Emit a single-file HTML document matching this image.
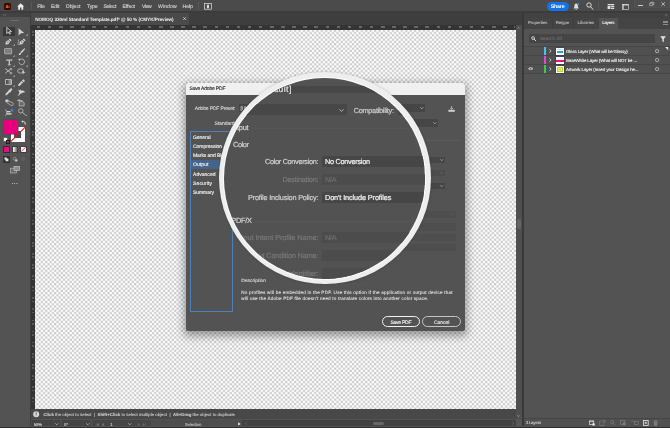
<!DOCTYPE html>
<html lang="en"><head><meta charset="utf-8"><title>Save Adobe PDF - Output</title>
<style>
html,body{margin:0;padding:0;}
body{width:670px;height:428px;overflow:hidden;background:#535353;font-family:"Liberation Sans",sans-serif;position:relative;}
.a{position:absolute;}
.t{position:absolute;white-space:nowrap;font-family:"Liberation Sans",sans-serif;}
svg{position:absolute;overflow:visible;}
svg.txt{filter:blur(.3px);}
svg.txt text{font-family:"Liberation Sans",sans-serif;text-rendering:geometricPrecision;white-space:pre;}
.fld{position:absolute;background:#464646;}
.row{position:absolute;left:523.6px;width:146.4px;height:8.9px;border-bottom:0.5px solid #484848;}
</style></head><body>

<!-- ===== canvas with checkerboard ===== -->
<svg class="a" style="left:35px;top:29.3px" width="481" height="380.2" viewBox="35 29.3 481 380.2">
<defs><pattern id="chk" x="36.3" y="30.1" width="4.444" height="4.444" patternUnits="userSpaceOnUse">
<rect width="4.444" height="4.444" fill="#ffffff"/><rect x="0.1" y="0.1" width="2.02" height="2.02" fill="#c2c2c2"/><rect x="2.322" y="2.322" width="2.02" height="2.02" fill="#c2c2c2"/></pattern></defs>
<rect x="35" y="29.3" width="481" height="380.2" fill="url(#chk)"/>
</svg>

<!-- ===== menu bar ===== -->
<div class="a" style="left:0;top:0;width:670px;height:12.4px;background:#4b4b4b"></div>
<div class="a" style="left:0;top:11.3px;width:670px;height:1.5px;background:#3c3c3c"></div>
<div class="a" style="left:4.1px;top:2.5px;width:7.3px;height:7.3px;background:#3a0703;border-radius:1.6px"></div>
<span class="t" style="left:5.5px;top:3.7px;font-size:4.1px;line-height:5px;color:#e8831a;font-weight:700">Ai</span>
<svg style="left:16.8px;top:2.6px" width="7.4" height="7" viewBox="0 0 74 70"><path d="M37 2 L2 34 L12 34 L12 68 L30 68 L30 46 L44 46 L44 68 L62 68 L62 34 L72 34 Z" fill="#ececec"/></svg>
<div class="a" style="left:30.9px;top:1.8px;width:0.6px;height:8.6px;background:#585858"></div>
<div class="a" style="left:197.6px;top:1.8px;width:0.6px;height:8.6px;background:#585858"></div>
<svg style="left:204px;top:2.6px" width="8" height="7" viewBox="0 0 80 70"><rect x="4" y="4" width="72" height="58" fill="none" stroke="#e0e0e0" stroke-width="7"/><path d="M30 18 h20 v26 l-10 14 l-12 -12 z" fill="#e0e0e0"/></svg>

<!-- share + right icons -->
<div class="a" style="left:546.7px;top:1.5px;width:22px;height:9.6px;border-radius:4.8px;background:#1473e6"></div>
<svg style="left:573.3px;top:2.6px" width="6.4" height="7.4" viewBox="0 0 64 74"><path d="M32 6 C18 6 14 20 14 32 C14 44 6 50 4 56 L60 56 C58 50 50 44 50 32 C50 20 46 6 32 6 Z M24 62 h16 c0 12 -16 12 -16 0z" fill="#dcdcdc"/><circle cx="52" cy="10" r="11" fill="#2c8cf4"/></svg>
<svg style="left:585.8px;top:2.4px" width="7.6" height="7.8" viewBox="0 0 76 78"><circle cx="30" cy="30" r="22" fill="none" stroke="#e4e4e4" stroke-width="9"/><path d="M46 48 L70 74" stroke="#e4e4e4" stroke-width="10" stroke-linecap="round"/></svg>
<div class="a" style="left:598.2px;top:1.8px;width:0.6px;height:8.6px;background:#575757"></div>
<svg style="left:606.9px;top:4.1px" width="7.8" height="5" viewBox="0 0 80 60"><rect x="0" y="0" width="80" height="14" fill="#e0e0e0"/><rect x="0" y="22" width="34" height="38" fill="#e0e0e0"/><rect x="42" y="22" width="38" height="14" fill="#e0e0e0"/><rect x="42" y="44" width="38" height="16" fill="#e0e0e0"/></svg>
<svg style="left:622px;top:3.8px" width="7.2" height="5.7" viewBox="0 0 74 64"><rect x="4" y="4" width="66" height="56" fill="none" stroke="#dcdcdc" stroke-width="7"/><rect x="4" y="4" width="66" height="12" fill="#dcdcdc"/><rect x="4" y="4" width="14" height="56" fill="#dcdcdc" opacity=".7"/></svg>
<div class="a" style="left:634px;top:0;width:36px;height:8px;background:#4e4e4e;box-shadow:inset .5px -.5px 0 #575757"></div>
<div class="a" style="left:638.2px;top:4.6px;width:4.8px;height:0.9px;background:#cfcfcf"></div>
<svg style="left:649.2px;top:2.3px" width="5.4" height="3.9" viewBox="0 0 68 54"><rect x="4" y="18" width="44" height="32" rx="4" fill="none" stroke="#d8d8d8" stroke-width="8"/><path d="M20 14 V4 H64 V36 H52" fill="none" stroke="#d8d8d8" stroke-width="8"/></svg>
<svg style="left:661.2px;top:2.1px" width="4.4" height="4.2" viewBox="0 0 64 64"><path d="M6 6 L58 58 M58 6 L6 58" stroke="#e0e0e0" stroke-width="11"/></svg>

<!-- ===== document tab bar ===== -->
<div class="a" style="left:31.3px;top:12.7px;width:491px;height:12.1px;background:#3e3e3e"></div>
<div class="a" style="left:31.3px;top:12.7px;width:157.3px;height:12.1px;background:#4a4a4a"></div>
<svg style="left:182.8px;top:17px" width="3.2" height="3.2" viewBox="0 0 32 32"><path d="M3 3 L29 29 M29 3 L3 29" stroke="#f0f0f0" stroke-width="7"/></svg>

<!-- ===== rulers ===== -->
<div class="a" style="left:31.3px;top:24.7px;width:484.6px;height:5px;background:#343434"></div>
<div class="a" style="left:31.3px;top:24.7px;width:3.8px;height:384.8px;background:#343434"></div>
<div class="a" id="rt" style="left:37.2px;top:25.9px;width:478px;height:2.2px;background:repeating-linear-gradient(90deg,#9a9a9a 0,#9a9a9a 3.4px,transparent 3.4px,transparent 11.1px);opacity:.5"></div>
<div class="a" id="rl" style="left:32.2px;top:31px;width:1.9px;height:377px;background:repeating-linear-gradient(180deg,#8c8c8c 0,#8c8c8c 1.6px,transparent 1.6px,transparent 3.4px,#8c8c8c 3.4px,#8c8c8c 5px,transparent 5px,transparent 11.1px);opacity:.42"></div>

<!-- ===== left toolbar ===== -->
<div class="a" style="left:0;top:12.7px;width:30.2px;height:413.5px;background:#535353"></div>
<div class="a" style="left:0;top:12.7px;width:30.2px;height:4.4px;background:#424242"></div>
<div class="a" style="left:30.2px;top:12.7px;width:1.1px;height:413.5px;background:#3c3c3c"></div>
<svg style="left:3px;top:14px" width="3" height="2.2" viewBox="0 0 30 22"><path d="M13 3 L5 11 L13 19 M27 3 L19 11 L27 19" fill="none" stroke="#a8a8a8" stroke-width="4.5"/></svg>
<div class="a" style="left:10.8px;top:19.9px;width:8.4px;height:0.9px;background:repeating-linear-gradient(90deg,#6e6e6e 0,#6e6e6e .6px,transparent .6px,transparent 1.05px)"></div>
<div class="a" style="left:3px;top:26.7px;width:11.6px;height:9px;background:#383838;border-radius:.6px"></div>
<svg style="left:5.60px;top:27.40px" width="6.4" height="7.6" viewBox="0 0 64 76"><path d="M8 4 L8 66 L24 50 L36 72 L44 68 L33 46 L56 46 Z" fill="none" stroke="#d2d2d2" stroke-width="9" stroke-linejoin="round"/></svg>
<svg style="left:18.30px;top:27.50px" width="6.6" height="7.8" viewBox="0 0 64 76"><path d="M6 2 L6 72 L28 50 L60 48 Z" fill="#d2d2d2"/></svg>
<svg style="left:25.60px;top:34.20px" width="1.7" height="1.7" viewBox="0 0 14 14"><path d="M14 0 V14 H0 Z" fill="#c4c4c4"/></svg>
<svg style="left:5.30px;top:37.90px" width="7" height="7" viewBox="0 0 64 64"><path d="M44 4 L60 20 L50 30 L34 14 Z M30 18 L46 34 L30 56 L8 60 L4 56 L8 34 Z" fill="#d2d2d2"/><circle cx="26" cy="38" r="5" fill="#535353"/></svg>
<svg style="left:19.10px;top:37.90px" width="7" height="7" viewBox="0 0 64 64"><path d="M44 4 L60 20 L50 30 L34 14 Z M30 18 L46 34 L30 56 L8 60 L4 56 L8 34 Z" fill="#d2d2d2"/><circle cx="26" cy="38" r="5" fill="#535353"/></svg>
<svg style="left:16.50px;top:38.80px" width="3.4" height="6.4" viewBox="0 0 34 64"><path d="M20 4 C2 16 30 28 12 40 C2 50 14 62 28 54" fill="none" stroke="#d2d2d2" stroke-width="6"/></svg>
<svg style="left:12.80px;top:44.40px" width="1.7" height="1.7" viewBox="0 0 14 14"><path d="M14 0 V14 H0 Z" fill="#c4c4c4"/></svg>
<svg style="left:4.30px;top:48.40px" width="8.2" height="6.4" viewBox="0 0 82 64"><rect x="5" y="5" width="72" height="54" rx="6" fill="#7e7e7e" stroke="#b8b8b8" stroke-width="7"/></svg>
<svg style="left:17.70px;top:47.90px" width="7.4" height="7.4" viewBox="0 0 74 74"><path d="M64 2 L72 10 L36 52 L24 40 Z M22 44 L32 54 C30 68 16 72 2 70 C14 62 10 50 22 44 Z" fill="#d2d2d2"/></svg>
<svg style="left:12.80px;top:54.60px" width="1.7" height="1.7" viewBox="0 0 14 14"><path d="M14 0 V14 H0 Z" fill="#c4c4c4"/></svg>
<svg style="left:25.60px;top:54.60px" width="1.7" height="1.7" viewBox="0 0 14 14"><path d="M14 0 V14 H0 Z" fill="#c4c4c4"/></svg>
<svg style="left:5.50px;top:58.50px" width="6.6" height="6.6" viewBox="0 0 66 66"><path d="M4 4 H62 V20 H54 V14 H39 V54 H48 V62 H18 V54 H27 V14 H12 V20 H4 Z" fill="#d2d2d2"/></svg>
<svg style="left:17.80px;top:58.20px" width="7.2" height="7.2" viewBox="0 0 72 72"><path d="M16 20 A28 28 0 1 1 10 44" fill="none" stroke="#d2d2d2" stroke-width="7"/><path d="M4 6 L26 12 L10 30 Z" fill="#d2d2d2"/></svg>
<svg style="left:12.80px;top:64.80px" width="1.7" height="1.7" viewBox="0 0 14 14"><path d="M14 0 V14 H0 Z" fill="#c4c4c4"/></svg>
<svg style="left:25.60px;top:64.80px" width="1.7" height="1.7" viewBox="0 0 14 14"><path d="M14 0 V14 H0 Z" fill="#c4c4c4"/></svg>
<svg style="left:4.80px;top:68.30px" width="8" height="7.4" viewBox="0 0 80 74"><path d="M6 8 L52 44 M6 50 L50 16" stroke="#d2d2d2" stroke-width="8" stroke-linecap="round"/><circle cx="60" cy="12" r="9" fill="none" stroke="#d2d2d2" stroke-width="6"/><circle cx="60" cy="52" r="9" fill="none" stroke="#d2d2d2" stroke-width="6"/></svg>
<svg style="left:17.10px;top:68.00px" width="8.6" height="7.2" viewBox="0 0 86 72"><ellipse cx="36" cy="30" rx="30" ry="22" fill="none" stroke="#d2d2d2" stroke-width="7"/><path d="M52 26 L84 46 L66 50 L60 68 Z" fill="#d2d2d2"/></svg>
<svg style="left:12.80px;top:75.00px" width="1.7" height="1.7" viewBox="0 0 14 14"><path d="M14 0 V14 H0 Z" fill="#c4c4c4"/></svg>
<div class="a" style="left:4.60px;top:78.80px;width:7.6px;height:6.6px;border:.5px solid #b4b4b4;border-radius:.8px;box-sizing:border-box;background:linear-gradient(90deg,#3e3e3e,#a4a4a4)"></div>
<svg style="left:17.80px;top:78.60px" width="7.2" height="7.2" viewBox="0 0 76 76"><path d="M56 2 L74 20 L60 34 L42 16 Z M38 22 L54 38 L20 72 L2 74 L4 56 Z" fill="#d2d2d2"/><path d="M26 40 L36 50" stroke="#535353" stroke-width="6"/></svg>
<svg style="left:12.80px;top:85.20px" width="1.7" height="1.7" viewBox="0 0 14 14"><path d="M14 0 V14 H0 Z" fill="#c4c4c4"/></svg>
<svg style="left:4.80px;top:88.40px" width="7.6" height="7.6" viewBox="0 0 76 76"><path d="M56 4 C66 -2 78 10 70 20 L58 32 L62 36 L54 44 L50 40 L20 70 L6 74 L4 70 L8 56 L38 26 L34 22 L42 14 L46 18 Z" fill="#d2d2d2"/></svg>
<svg style="left:17.40px;top:88.80px" width="8.4" height="6.8" viewBox="0 0 84 68"><path d="M10 6 L26 14 L36 4 L44 18 C60 8 80 20 82 36 C72 30 62 32 56 40 L38 44 L18 64 L6 66 L14 54 L24 40 L20 24 Z" fill="#d2d2d2"/></svg>
<svg style="left:4.70px;top:99.00px" width="8.2" height="6.8" viewBox="0 0 82 68"><rect x="4" y="6" width="30" height="22" fill="#d2d2d2"/><path d="M22 14 L66 34 A16 16 0 1 1 54 60 L10 30 Z" fill="none" stroke="#d2d2d2" stroke-width="7"/></svg>
<svg style="left:17.30px;top:98.90px" width="7.8" height="7.4" viewBox="0 0 78 74"><path d="M22 0 V20 M0 16 H56" stroke="#d2d2d2" stroke-width="7"/><path d="M22 26 H60 L72 38 V70 H22 Z" fill="#6a6a6a" stroke="#d2d2d2" stroke-width="6"/></svg>
<svg style="left:4.60px;top:108.80px" width="8.4" height="7.2" viewBox="0 0 84 72"><path d="M4 4 L16 22 V50 L4 68" fill="none" stroke="#d2d2d2" stroke-width="7"/><rect x="20" y="20" width="34" height="14" fill="#d2d2d2"/><rect x="20" y="42" width="46" height="14" fill="#d2d2d2"/><rect x="58" y="2" width="24" height="24" rx="4" fill="#2a8cf0"/></svg>
<svg style="left:17.60px;top:108.00px" width="8.8" height="8" viewBox="0 0 88 80"><circle cx="28" cy="28" r="22" fill="none" stroke="#d2d2d2" stroke-width="7"/><path d="M44 44 L74 70" stroke="#d2d2d2" stroke-width="8"/><path d="M88 66 V80 H74 Z" fill="#c4c4c4"/></svg>
<div class="a" style="left:10.5px;top:127.2px;width:14.6px;height:14.6px;background:#ffffff"></div>
<div class="a" style="left:14.2px;top:131px;width:6.8px;height:6.8px;background:#4a4a4a"></div>
<svg style="left:10px;top:126.8px" width="15.4" height="15.4" viewBox="0 0 154 154"><path d="M2 152 L152 2" stroke="#f01414" stroke-width="11"/></svg>
<div class="a" style="left:3px;top:119.8px;width:14.5px;height:14.4px;background:#e6007e;box-shadow:0 0 0 .5px #4a4a4a"></div>
<svg style="left:20.70px;top:119.90px" width="5.4" height="5.4" viewBox="0 0 54 54"><path d="M4 16 L18 2 V10 C40 10 46 20 46 34 H52 L42 50 L32 34 H38 C38 24 34 20 18 20 V30 Z" fill="#d8d8d8"/></svg>
<div class="a" style="left:3.8px;top:137.6px;width:3.4px;height:3.4px;background:#fafafa;box-shadow:0 0 0 .6px #7a7a7a"></div>
<div class="a" style="left:5.6px;top:139.6px;width:2.4px;height:2.4px;border:.8px solid #1c1c1c"></div>
<div class="a" style="left:3.2px;top:146.2px;width:6.6px;height:6.8px;background:#2e2e2e;border-radius:.6px"></div>
<div class="a" style="left:4.2px;top:147.4px;width:4.6px;height:4.4px;background:#ea0a86"></div>
<div class="a" style="left:12.2px;top:146.2px;width:6px;height:6.8px;background:#404040;border-radius:.6px"></div>
<div class="a" style="left:13.2px;top:147.4px;width:4px;height:4.4px;background:linear-gradient(90deg,#ffffff,#6a6a6a)"></div>
<div class="a" style="left:20.4px;top:146.2px;width:6.2px;height:6.8px;background:#404040;border-radius:.6px"></div>
<div class="a" style="left:21.3px;top:147.4px;width:4.4px;height:4.4px;background:#f4f4f4"></div>
<svg style="left:21.2px;top:147.2px" width="4.8" height="4.8" viewBox="0 0 48 48"><path d="M2 46 L46 2" stroke="#f01414" stroke-width="8"/></svg>
<div class="a" style="left:3.2px;top:156.4px;width:6.6px;height:6.4px;background:#333333;border-radius:.6px"></div>
<svg style="left:4.20px;top:157.40px" width="4.6" height="4.4" viewBox="0 0 46 44"><circle cx="16" cy="16" r="13" fill="#d0d0d0"/><rect x="16" y="16" width="28" height="26" rx="3" fill="#e6e6e6"/></svg>
<svg style="left:12.80px;top:157.30px" width="4.8" height="4.6" viewBox="0 0 48 46"><circle cx="18" cy="18" r="14" fill="none" stroke="#bdbdbd" stroke-width="5"/><rect x="22" y="24" width="22" height="20" rx="3" fill="#cfcfcf"/></svg>
<svg style="left:21.00px;top:157.20px" width="4" height="4" viewBox="0 0 40 40"><circle cx="20" cy="20" r="15" fill="none" stroke="#6e6e6e" stroke-width="5"/><path d="M12 24 L26 14" stroke="#6e6e6e" stroke-width="5"/></svg>
<svg style="left:10.00px;top:166.10px" width="10" height="7.4" viewBox="0 0 100 74"><rect x="4" y="22" width="62" height="48" fill="#6a6a6a" stroke="#c0c0c0" stroke-width="6"/><rect x="40" y="4" width="56" height="42" fill="#8c8c8c" stroke="#cfcfcf" stroke-width="6"/></svg>
<div class="a" style="left:12px;top:182.8px;width:1.3px;height:1.3px;border-radius:50%;background:#dedede;box-shadow:2.2px 0 0 #dedede,4.4px 0 0 #dedede"></div>

<!-- ===== bottom bars ===== -->
<div class="a" style="left:31.3px;top:409.3px;width:491px;height:10.2px;background:#484848"></div>
<div class="a" style="left:31.3px;top:419.5px;width:491px;height:6.7px;background:#4e4e4e"></div>
<div class="a" style="left:31.6px;top:420px;width:21.8px;height:6px;background:#444444"></div>
<div class="a" style="left:54px;top:420px;width:5.8px;height:6px;background:#444444"></div>
<div class="a" style="left:62.4px;top:420px;width:21.4px;height:6px;background:#444444"></div>
<div class="a" style="left:84.4px;top:420px;width:5.8px;height:6px;background:#444444"></div>
<div class="a" style="left:92.6px;top:420px;width:58.4px;height:6px;background:#464646"></div>
<div class="a" style="left:242px;top:419.6px;width:274.4px;height:6.9px;background:#424242"></div>
<div class="a" style="left:373px;top:421.6px;width:10.7px;height:3.4px;border-radius:1.8px;background:#686868"></div>
<svg style="left:33px;top:411.4px" width="6.4" height="6.4" viewBox="0 0 64 64"><circle cx="32" cy="32" r="30" fill="#dadada"/><path d="M32 14 v24" stroke="#555" stroke-width="8" stroke-linecap="round"/><circle cx="32" cy="49" r="4.5" fill="#555"/></svg>
<!-- chevrons in status bar -->
<svg style="left:55.2px;top:423.2px" width="3.6" height="2.2" viewBox="0 0 36 22"><path d="M3 3 L18 18 L33 3" fill="none" stroke="#e0e0e0" stroke-width="6"/></svg>
<svg style="left:85.8px;top:423.2px" width="3.6" height="2.2" viewBox="0 0 36 22"><path d="M3 3 L18 18 L33 3" fill="none" stroke="#e0e0e0" stroke-width="6"/></svg>
<svg style="left:128.4px;top:423.2px" width="3.6" height="2.2" viewBox="0 0 36 22"><path d="M3 3 L18 18 L33 3" fill="none" stroke="#e0e0e0" stroke-width="6"/></svg>
<svg style="left:96.4px;top:422.6px" width="10.6" height="3.2" viewBox="0 0 106 32"><path d="M4 2 V30 M28 2 L10 16 L28 30 Z M78 2 L60 16 L78 30 Z" fill="#777" stroke="#777" stroke-width="4"/></svg>
<svg style="left:137.4px;top:422.6px" width="10.6" height="3.2" viewBox="0 0 106 32"><path d="M10 2 L28 16 L10 30 Z M60 2 L78 16 L60 30 Z M86 2 V30" fill="#686868" stroke="#686868" stroke-width="4"/></svg>
<svg style="left:238px;top:421.9px" width="2.8" height="3.8" viewBox="0 0 28 38"><path d="M2 2 L26 19 L2 36 Z" fill="#f0f0f0"/></svg>
<svg style="left:245.4px;top:422.1px" width="2" height="3.2" viewBox="0 0 20 32"><path d="M17 3 L4 16 L17 29" fill="none" stroke="#8a8a8a" stroke-width="5"/></svg>
<svg style="left:511.8px;top:422px" width="2" height="3.2" viewBox="0 0 20 32"><path d="M3 3 L16 16 L3 29" fill="none" stroke="#8a8a8a" stroke-width="5"/></svg>

<!-- ===== vertical scrollbar ===== -->
<div class="a" style="left:515.9px;top:24.7px;width:6.2px;height:394.5px;background:#4f4f4f"></div>
<div class="a" style="left:517.1px;top:219.4px;width:4.4px;height:10px;border-radius:2px;background:#656565"></div>
<svg style="left:517.4px;top:26.8px" width="3.2" height="2" viewBox="0 0 32 20"><path d="M3 17 L16 4 L29 17" fill="none" stroke="#b4b4b4" stroke-width="5"/></svg>
<svg style="left:517.4px;top:415.2px" width="3.2" height="2" viewBox="0 0 32 20"><path d="M3 3 L16 16 L29 3" fill="none" stroke="#c4c4c4" stroke-width="5"/></svg>
<div class="a" style="left:516.4px;top:419.6px;width:5.7px;height:6.8px;background:#575757"></div>
<div class="a" style="left:522.1px;top:12.7px;width:1.8px;height:413.8px;background:#393939"></div>

<!-- ===== right panel ===== -->
<div class="a" style="left:523.6px;top:12.7px;width:146.4px;height:413.5px;background:#535353"></div>
<div class="a" style="left:523.6px;top:12.7px;width:146.4px;height:5px;background:#424242"></div>
<div class="a" style="left:523.6px;top:17.6px;width:146.4px;height:11px;background:#444444"></div>
<div class="a" style="left:598.8px;top:17.6px;width:19.1px;height:11px;background:#535353"></div>
<div class="a" style="left:551.6px;top:18px;width:0.5px;height:10.2px;background:#3e3e3e"></div>
<div class="a" style="left:573px;top:18px;width:0.5px;height:10.2px;background:#3e3e3e"></div>
<svg style="left:664.8px;top:14.1px" width="3" height="2.2" viewBox="0 0 30 22"><path d="M3 3 L11 11 L3 19 M17 3 L25 11 L17 19" fill="none" stroke="#a8a8a8" stroke-width="4.5"/></svg>
<div class="a" style="left:663px;top:21.3px;width:4.6px;height:3.4px;background:linear-gradient(#8a8a8a 0 .6px,transparent .6px 1.4px,#8a8a8a 1.4px 2px,transparent 2px 2.8px,#8a8a8a 2.8px 3.4px)"></div>
<!-- search -->
<div class="a" style="left:529px;top:33.9px;width:126px;height:9.2px;background:#454545;border-radius:.8px"></div>
<svg style="left:531px;top:36px" width="5.2" height="5.2" viewBox="0 0 48 48"><circle cx="19" cy="19" r="13" fill="none" stroke="#dcdcdc" stroke-width="8"/><path d="M29 29 L44 44" stroke="#dcdcdc" stroke-width="9" stroke-linecap="round"/></svg>
<svg style="left:659.8px;top:35.6px" width="6.2" height="6.4" viewBox="0 0 62 64"><path d="M2 2 H60 L38 30 V62 L24 52 V30 Z" fill="#e4e4e4"/></svg>
<!-- layer rows -->
<div class="a" style="left:523.6px;top:46.4px;width:146.4px;height:27.2px;background:#505050"></div>
<div class="a" style="left:523.6px;top:46.4px;width:146.4px;height:0.5px;background:#464646"></div>
<div class="a" style="left:523.6px;top:55.3px;width:146.4px;height:0.5px;background:#464646"></div>
<div class="a" style="left:523.6px;top:64.3px;width:146.4px;height:0.5px;background:#464646"></div>
<div class="a" style="left:523.6px;top:73.3px;width:146.4px;height:0.5px;background:#464646"></div>
<div class="a" style="left:652.4px;top:46.4px;width:0.5px;height:27px;background:#4a4a4a"></div>
<div class="a" style="left:543.5px;top:47.2px;width:2.3px;height:7.7px;background:#48c4ea"></div>
<div class="a" style="left:543.5px;top:56.2px;width:2.3px;height:7.7px;background:#e04ccc"></div>
<div class="a" style="left:543.5px;top:65.2px;width:2.3px;height:7.7px;background:#3ccc4c"></div>
<svg style="left:548.6px;top:49.2px" width="2.6" height="4" viewBox="0 0 22 36"><path d="M4 3 L18 18 L4 33" fill="none" stroke="#eaeaea" stroke-width="6.5"/></svg>
<svg style="left:548.6px;top:58.2px" width="2.6" height="4" viewBox="0 0 22 36"><path d="M4 3 L18 18 L4 33" fill="none" stroke="#eaeaea" stroke-width="6.5"/></svg>
<svg style="left:548.6px;top:67.2px" width="2.6" height="4" viewBox="0 0 22 36"><path d="M4 3 L18 18 L4 33" fill="none" stroke="#eaeaea" stroke-width="6.5"/></svg>
<div class="a" style="left:556.4px;top:47.7px;width:7.4px;height:7px;background:#ffffff;box-shadow:0 0 0 .5px #3a3a3a"></div>
<div class="a" style="left:557px;top:49.2px;width:6.2px;height:1px;background:#bfe4f8"></div>
<div class="a" style="left:557px;top:50.6px;width:6.2px;height:2px;background:#2aa0e8"></div>
<div class="a" style="left:556.4px;top:56.7px;width:7.4px;height:7px;background:#ffffff;box-shadow:0 0 0 .5px #3a3a3a"></div>
<div class="a" style="left:556.4px;top:60px;width:7.4px;height:2px;background:#e4108c"></div>
<div class="a" style="left:556.4px;top:65.7px;width:7.4px;height:7px;background:#ffffff;box-shadow:0 0 0 .5px #3a3a3a"></div>
<div class="a" style="left:557px;top:66.5px;width:6.2px;height:5.4px;background:#bcd62a"></div>
<div class="a" style="left:558.4px;top:67.8px;width:3.4px;height:2.8px;border:.4px solid #e4f08a;box-sizing:border-box"></div>
<svg style="left:654.8px;top:49.3px" width="4.2" height="4.2" viewBox="0 0 42 42"><circle cx="21" cy="21" r="16.5" fill="none" stroke="#cfcfcf" stroke-width="7"/></svg>
<svg style="left:654.8px;top:58.1px" width="4.2" height="4.2" viewBox="0 0 42 42"><circle cx="21" cy="21" r="16.5" fill="none" stroke="#cfcfcf" stroke-width="7"/></svg>
<svg style="left:654.8px;top:66.9px" width="4.2" height="4.2" viewBox="0 0 42 42"><circle cx="21" cy="21" r="16.5" fill="none" stroke="#cfcfcf" stroke-width="7"/></svg>
<svg style="left:664.8px;top:46.9px" width="3.2" height="3.2" viewBox="0 0 26 26"><path d="M0 0 H26 V26 Z" fill="#e4e4e4"/></svg>
<svg style="left:527.6px;top:67.3px" width="5.4" height="3.4" viewBox="0 0 54 34"><path d="M2 17 C14 -2 40 -2 52 17 C40 36 14 36 2 17 Z" fill="#c4c4c4"/><circle cx="27" cy="17" r="8" fill="#555"/></svg>
<!-- panel bottom bar -->
<div class="a" style="left:523.6px;top:418.3px;width:146.4px;height:8.3px;background:#515151;border-top:.6px solid #454545"></div>
<svg style="left:588.7px;top:419.8px" width="6.2" height="6" viewBox="0 0 62 60"><rect x="6" y="10" width="40" height="34" fill="none" stroke="#e6e6e6" stroke-width="7"/><path d="M12 0 V16 M40 0 V16 M0 16 H52" stroke="#e6e6e6" stroke-width="5"/><rect x="34" y="34" width="24" height="22" fill="#e6e6e6"/></svg>
<svg style="left:598.8px;top:419.8px" width="6.6" height="6" viewBox="0 0 66 60"><path d="M30 12 H6 V56 H50 V32" fill="none" stroke="#7c7c7c" stroke-width="7"/><path d="M34 4 H60 V30 M60 4 L32 32" fill="none" stroke="#7c7c7c" stroke-width="7"/></svg>
<svg style="left:609.8px;top:420px" width="5.6" height="5.6" viewBox="0 0 56 56"><circle cx="22" cy="22" r="16" fill="none" stroke="#7c7c7c" stroke-width="7"/><path d="M34 34 L52 52" stroke="#7c7c7c" stroke-width="8"/></svg>
<svg style="left:620px;top:420px" width="6" height="5.6" viewBox="0 0 60 56"><rect x="4" y="4" width="44" height="40" fill="none" stroke="#7c7c7c" stroke-width="7"/><rect x="26" y="24" width="30" height="28" fill="#7c7c7c"/></svg>
<svg style="left:630.6px;top:420.4px" width="7.6" height="5" viewBox="0 0 76 50"><path d="M2 10 H30 L40 24" fill="none" stroke="#7c7c7c" stroke-width="7"/><rect x="34" y="14" width="38" height="32" fill="none" stroke="#7c7c7c" stroke-width="7"/></svg>
<svg style="left:642.7px;top:419.9px" width="5.6" height="5.8" viewBox="0 0 56 58"><rect x="4" y="4" width="48" height="50" fill="none" stroke="#e6e6e6" stroke-width="8"/><path d="M28 16 V42 M15 29 H41" stroke="#e6e6e6" stroke-width="8"/></svg>
<svg style="left:653.4px;top:419.8px" width="5.2" height="6" viewBox="0 0 52 60"><path d="M2 12 H50 M18 12 V4 H34 V12" fill="none" stroke="#7c7c7c" stroke-width="7"/><path d="M8 18 H44 L40 58 H12 Z" fill="#7c7c7c"/></svg>

<!-- bottom strip -->
<div class="a" style="left:0;top:426.5px;width:670px;height:1.6px;background:#2e2e2e"></div>

<!-- ===== dialog ===== -->
<div class="a" style="left:186.4px;top:83.4px;width:278.4px;height:247.3px;background:#535353;border-radius:2px;box-shadow:0 3px 9px 1.5px rgba(0,0,0,.36)"></div>
<div class="a" style="left:186.4px;top:83.4px;width:278.4px;height:11.3px;background:#f0f0f0;border-radius:2px 2px 0 0"></div>
<!-- preset dropdown -->
<div class="fld" style="left:238.6px;top:103.9px;width:186.8px;height:8px"></div>
<svg style="left:420.2px;top:106.8px" width="3.6" height="2.2" viewBox="0 0 36 22"><path d="M3 3 L18 18 L33 3" fill="none" stroke="#d8d8d8" stroke-width="6"/></svg>
<svg style="left:448px;top:105.8px" width="7.2" height="6" viewBox="0 0 72 60"><path d="M36 0 V30 M22 20 L36 34 L50 20" fill="none" stroke="#d0d0d0" stroke-width="7"/><rect x="4" y="38" width="64" height="20" fill="#d0d0d0"/></svg>
<div class="fld" style="left:238.6px;top:119px;width:199.2px;height:7.8px"></div>
<svg style="left:432.6px;top:121.9px" width="3.6" height="2.2" viewBox="0 0 36 22"><path d="M3 3 L18 18 L33 3" fill="none" stroke="#d8d8d8" stroke-width="6"/></svg>
<!-- list box -->
<div class="a" style="left:190.1px;top:131.4px;width:42.7px;height:180.4px;border:.7px solid #4f7fb6;box-sizing:border-box"></div>
<div class="a" style="left:190.8px;top:160.3px;width:41.3px;height:8.4px;background:#46638a"></div>
<!-- right-side fields of the dialog -->
<div class="a" style="left:236px;top:140px;width:224px;height:.5px;background:#5b5b5b"></div>
<div class="fld" style="left:322px;top:156.7px;width:123.4px;height:6.8px"></div>
<div class="fld" style="left:322px;top:169.6px;width:123.4px;height:6.8px;background:#4d4d4d"></div>
<div class="fld" style="left:322px;top:182.6px;width:123.4px;height:6.8px"></div>
<svg style="left:440.2px;top:159.1px" width="3.4" height="2" viewBox="0 0 36 22"><path d="M3 3 L18 18 L33 3" fill="none" stroke="#d8d8d8" stroke-width="6"/></svg>
<svg style="left:440.2px;top:172px" width="3.4" height="2" viewBox="0 0 36 22"><path d="M3 3 L18 18 L33 3" fill="none" stroke="#707070" stroke-width="6"/></svg>
<svg style="left:440.2px;top:185px" width="3.4" height="2" viewBox="0 0 36 22"><path d="M3 3 L18 18 L33 3" fill="none" stroke="#d8d8d8" stroke-width="6"/></svg>
<div class="fld" style="left:322px;top:210.5px;width:134.4px;height:7.4px;background:#4e4e4e"></div>
<svg style="left:451px;top:213.2px" width="3.4" height="2" viewBox="0 0 36 22"><path d="M3 3 L18 18 L33 3" fill="none" stroke="#707070" stroke-width="6"/></svg>
<div class="fld" style="left:322px;top:223.4px;width:134.4px;height:7.2px;background:#4e4e4e"></div>
<div class="fld" style="left:322px;top:233.6px;width:134.4px;height:7.2px;background:#4e4e4e"></div>
<div class="fld" style="left:322px;top:243.8px;width:134.4px;height:7.2px;background:#4e4e4e"></div>
<div class="a" style="left:237.7px;top:284px;width:221.8px;height:27.6px;border:.5px solid #5a5a5a;box-sizing:border-box;opacity:.35"></div>
<!-- buttons -->
<div class="a" style="left:381.6px;top:316px;width:38.9px;height:11px;border:.95px solid #f2f2f2;border-radius:5.5px;box-sizing:border-box"></div>
<div class="a" style="left:422.4px;top:316px;width:38.5px;height:11px;border:.7px solid #c4c4c4;border-radius:5.5px;box-sizing:border-box"></div>

<svg class="txt" width="670" height="428" style="left:0;top:0">
<text x="37.20" y="7.93" font-size="5.1" fill="#d2d2d2" textLength="7.70" lengthAdjust="spacing" stroke="#d2d2d2" stroke-width="0.14">File</text>
<text x="50.90" y="7.93" font-size="5.1" fill="#d2d2d2" textLength="8.50" lengthAdjust="spacing" stroke="#d2d2d2" stroke-width="0.14">Edit</text>
<text x="65.80" y="7.93" font-size="5.1" fill="#d2d2d2" textLength="14.50" lengthAdjust="spacing" stroke="#d2d2d2" stroke-width="0.14">Object</text>
<text x="87.00" y="7.93" font-size="5.1" fill="#d2d2d2" textLength="10.50" lengthAdjust="spacing" stroke="#d2d2d2" stroke-width="0.14">Type</text>
<text x="103.40" y="7.93" font-size="5.1" fill="#d2d2d2" textLength="12.90" lengthAdjust="spacing" stroke="#d2d2d2" stroke-width="0.14">Select</text>
<text x="122.50" y="7.93" font-size="5.1" fill="#d2d2d2" textLength="12.50" lengthAdjust="spacing" stroke="#d2d2d2" stroke-width="0.14">Effect</text>
<text x="141.90" y="7.93" font-size="5.1" fill="#d2d2d2" textLength="9.90" lengthAdjust="spacing" stroke="#d2d2d2" stroke-width="0.14">View</text>
<text x="158.00" y="7.93" font-size="5.1" fill="#d2d2d2" textLength="18.70" lengthAdjust="spacing" stroke="#d2d2d2" stroke-width="0.14">Window</text>
<text x="182.60" y="7.93" font-size="5.1" fill="#d2d2d2" textLength="10.20" lengthAdjust="spacing" stroke="#d2d2d2" stroke-width="0.14">Help</text>
<text x="35.20" y="20.58" font-size="4.7" fill="#f2f2f2" textLength="138.40" lengthAdjust="spacing" font-weight="700">NOMOQ 330ml Standard Template.pdf* @ 50 % (CMYK/Preview)</text>
<text x="550.80" y="8.16" font-size="5.2" fill="#ffffff" textLength="13.80" lengthAdjust="spacing" font-weight="700">Share</text>
<text x="527.90" y="24.38" font-size="4.4" fill="#b4b4b4" textLength="19.60" lengthAdjust="spacing" font-weight="700">Properties</text>
<text x="555.80" y="24.38" font-size="4.4" fill="#b4b4b4" textLength="13.40" lengthAdjust="spacing" font-weight="700">Retype</text>
<text x="577.60" y="24.38" font-size="4.4" fill="#b4b4b4" textLength="16.70" lengthAdjust="spacing" font-weight="700">Libraries</text>
<text x="602.20" y="24.38" font-size="4.4" fill="#f4f4f4" textLength="12.40" lengthAdjust="spacing" font-weight="700">Layers</text>
<text x="539.90" y="40.35" font-size="4.6" fill="#6e6e6e" textLength="21.90" lengthAdjust="spacing" stroke="#6e6e6e" stroke-width="0.13">Search All</text>
<text x="566.00" y="52.88" font-size="4.4" fill="#f2f2f2" textLength="61.70" lengthAdjust="spacing" stroke="#f2f2f2" stroke-width="0.12">Gloss Layer (What will be Glossy)</text>
<text x="566.00" y="61.98" font-size="4.4" fill="#f2f2f2" textLength="71.00" lengthAdjust="spacing" stroke="#f2f2f2" stroke-width="0.12">BaseWhite Layer (What will NOT be ...</text>
<text x="566.00" y="70.78" font-size="4.4" fill="#f2f2f2" textLength="72.50" lengthAdjust="spacing" stroke="#f2f2f2" stroke-width="0.12">Artwork Layer (Insert your Design he...</text>
<text x="526.00" y="423.90" font-size="4.2" fill="#cfcfcf" textLength="15.00" lengthAdjust="spacing" stroke="#cfcfcf" stroke-width="0.12">3 Layers</text>
<text x="43.40" y="416.44" font-size="4.3" fill="#c8c8c8" textLength="191.60" lengthAdjust="spacing" stroke="#c8c8c8" stroke-width="0.12"><tspan font-weight="700">Click</tspan> the object to select  |  <tspan font-weight="700">Shift+Click</tspan> to select multiple object  |  <tspan font-weight="700">Alt+Drag</tspan> the object to duplicate</text>
<text x="33.70" y="425.98" font-size="4.4" fill="#d0d0d0" textLength="8.20" lengthAdjust="spacing" stroke="#d0d0d0" stroke-width="0.12">50%</text>
<text x="64.00" y="425.98" font-size="4.4" fill="#d0d0d0" textLength="4.30" lengthAdjust="spacing" stroke="#d0d0d0" stroke-width="0.12">0°</text>
<text x="110.20" y="425.98" font-size="4.4" fill="#d0d0d0" textLength="2.10" lengthAdjust="spacing" stroke="#d0d0d0" stroke-width="0.12">1</text>
<text x="184.80" y="425.74" font-size="4.3" fill="#bdbdbd" textLength="16.70" lengthAdjust="spacing" stroke="#bdbdbd" stroke-width="0.12">Selection</text>
<text x="189.50" y="90.49" font-size="5.0" fill="#2a2a2a" textLength="36.00" lengthAdjust="spacing" stroke="#2a2a2a" stroke-width="0.14">Save Adobe PDF</text>
<text x="194.80" y="109.79" font-size="5.0" fill="#d4d4d4" textLength="40.60" lengthAdjust="spacing" stroke="#d4d4d4" stroke-width="0.14">Adobe PDF Preset:</text>
<text x="240.50" y="109.79" font-size="5.0" fill="#d4d4d4" textLength="44.50" lengthAdjust="spacing" stroke="#d4d4d4" stroke-width="0.14">[Illustrator Default]</text>
<text x="214.60" y="124.79" font-size="5.0" fill="#d4d4d4" textLength="21.40" lengthAdjust="spacing" stroke="#d4d4d4" stroke-width="0.14">Standard:</text>
<text x="193.00" y="138.59" font-size="5.0" fill="#f0f0f0" textLength="17.50" lengthAdjust="spacing" stroke="#f0f0f0" stroke-width="0.14">General</text>
<text x="193.00" y="148.09" font-size="5.0" fill="#f0f0f0" textLength="29.00" lengthAdjust="spacing" stroke="#f0f0f0" stroke-width="0.14">Compression</text>
<text x="193.00" y="156.89" font-size="5.0" fill="#f0f0f0" textLength="39.00" lengthAdjust="spacing" stroke="#f0f0f0" stroke-width="0.14">Marks and Bleeds</text>
<text x="193.00" y="166.39" font-size="5.0" fill="#f0f0f0" textLength="15.50" lengthAdjust="spacing" stroke="#f0f0f0" stroke-width="0.14">Output</text>
<text x="193.00" y="175.79" font-size="5.0" fill="#f0f0f0" textLength="22.50" lengthAdjust="spacing" stroke="#f0f0f0" stroke-width="0.14">Advanced</text>
<text x="193.00" y="184.79" font-size="5.0" fill="#f0f0f0" textLength="19.00" lengthAdjust="spacing" stroke="#f0f0f0" stroke-width="0.14">Security</text>
<text x="193.00" y="194.29" font-size="5.0" fill="#f0f0f0" textLength="21.00" lengthAdjust="spacing" stroke="#f0f0f0" stroke-width="0.14">Summary</text>
<text x="241.30" y="281.62" font-size="4.8" fill="#dcdcdc" textLength="24.70" lengthAdjust="spacing" stroke="#dcdcdc" stroke-width="0.13">Description</text>
<text x="241.30" y="294.05" font-size="4.6" fill="#dcdcdc" textLength="211.20" lengthAdjust="spacing" stroke="#dcdcdc" stroke-width="0.13">No profiles will be embedded in the PDF. Use this option if the application or output device that</text>
<text x="241.30" y="300.15" font-size="4.6" fill="#dcdcdc" textLength="187.00" lengthAdjust="spacing" stroke="#dcdcdc" stroke-width="0.13">will use the Adobe PDF file doesn't need to translate colors into another color space.</text>
<text x="390.50" y="323.59" font-size="5.0" fill="#f4f4f4" textLength="21.00" lengthAdjust="spacing" stroke="#f4f4f4" stroke-width="0.14">Save PDF</text>
<text x="434.00" y="323.59" font-size="5.0" fill="#e6e6e6" textLength="15.30" lengthAdjust="spacing" stroke="#e6e6e6" stroke-width="0.14">Cancel</text>
</svg>

<!-- ===== magnifier lens ===== -->
<div class="a" id="lens" style="left:218.6px;top:72.1px;width:212.4px;height:212.4px;border-radius:50%;background:#eeeeee;box-shadow:0 0 3px rgba(0,0,0,.2)"></div>
<div class="a" id="lensin" style="left:224.4px;top:77.9px;width:200.8px;height:200.8px;border-radius:50%;background:#525252;overflow:hidden;box-shadow:0 0 0 1.1px #fcfcfc">
<div class="a" style="left:-224.4px;top:-77.9px;width:670px;height:428px">
<div class="fld" style="left:220px;top:86.1px;width:215px;height:6.9px;background:#474747"></div>
<div class="fld" style="left:220px;top:104.4px;width:127.2px;height:11px;background:#474747;border-radius:0 1px 1px 0"></div>
<svg style="left:339.3px;top:108.7px" width="5" height="2.7" viewBox="0 0 50 27"><path d="M4 4 L25 23 L46 4" fill="none" stroke="#e4e4e4" stroke-width="7"/></svg>
<div class="fld" style="left:398px;top:104.4px;width:40px;height:11px;background:#474747"></div>
<div class="a" style="left:252px;top:127.6px;width:180px;height:.5px;background:#575757"></div>
<div class="fld" style="left:321.8px;top:156px;width:115px;height:10.9px;background:#464646"></div>
<div class="fld" style="left:321.8px;top:174px;width:115px;height:11.2px;background:#4c4c4c"></div>
<div class="fld" style="left:321.8px;top:192.3px;width:115px;height:10.9px;background:#464646"></div>
<div class="a" style="left:255px;top:220.6px;width:180px;height:.5px;background:#565656"></div>
<div class="fld" style="left:321.8px;top:231.9px;width:115px;height:11.2px;background:#4c4c4c"></div>
<div class="fld" style="left:321.8px;top:250px;width:115px;height:11.2px;background:#4c4c4c"></div>
<div class="fld" style="left:321.8px;top:268px;width:115px;height:11.2px;background:#4c4c4c"></div>
<svg class="txt" width="670" height="428" style="left:0;top:0">
<text x="213.50" y="92.38" font-size="8.6" fill="#e4e4e4" textLength="77.80" lengthAdjust="spacing" stroke="#e4e4e4" stroke-width="0.24">[Illustrator Default]</text>
<text x="353.70" y="112.61" font-size="7.3" fill="#d0d0d0" textLength="40.30" lengthAdjust="spacing" stroke="#d0d0d0" stroke-width="0.20">Compatibility:</text>
<text x="227.50" y="130.25" font-size="7.4" fill="#d0d0d0" textLength="21.10" lengthAdjust="spacing" stroke="#d0d0d0" stroke-width="0.21">Output</text>
<text x="233.00" y="147.15" font-size="7.4" fill="#d0d0d0" textLength="16.00" lengthAdjust="spacing" stroke="#d0d0d0" stroke-width="0.21">Color</text>
<text x="265.00" y="163.91" font-size="7.3" fill="#d0d0d0" textLength="53.50" lengthAdjust="spacing" stroke="#d0d0d0" stroke-width="0.20">Color Conversion:</text>
<text x="325.00" y="163.91" font-size="7.3" fill="#f4f4f4" textLength="45.00" lengthAdjust="spacing" stroke="#f4f4f4" stroke-width="0.20">No Conversion</text>
<text x="282.40" y="182.31" font-size="7.3" fill="#7a7a7a" textLength="36.10" lengthAdjust="spacing" stroke="#7a7a7a" stroke-width="0.20">Destination:</text>
<text x="325.00" y="182.31" font-size="7.3" fill="#6e6e6e" textLength="11.50" lengthAdjust="spacing" stroke="#6e6e6e" stroke-width="0.20">N/A</text>
<text x="248.00" y="200.01" font-size="7.3" fill="#d0d0d0" textLength="70.50" lengthAdjust="spacing" stroke="#d0d0d0" stroke-width="0.20">Profile Inclusion Policy:</text>
<text x="325.00" y="200.01" font-size="7.3" fill="#f4f4f4" textLength="66.40" lengthAdjust="spacing" stroke="#f4f4f4" stroke-width="0.20">Don't Include Profiles</text>
<text x="231.20" y="223.15" font-size="7.4" fill="#d0d0d0" textLength="20.80" lengthAdjust="spacing" stroke="#d0d0d0" stroke-width="0.21">PDF/X</text>
<text x="232.00" y="240.21" font-size="7.3" fill="#787878" textLength="86.50" lengthAdjust="spacing" stroke="#787878" stroke-width="0.20">Output Intent Profile Name:</text>
<text x="325.00" y="240.21" font-size="7.3" fill="#6e6e6e" textLength="11.50" lengthAdjust="spacing" stroke="#6e6e6e" stroke-width="0.20">N/A</text>
<text x="243.50" y="258.21" font-size="7.3" fill="#787878" textLength="75.00" lengthAdjust="spacing" stroke="#787878" stroke-width="0.20">Output Condition Name:</text>
<text x="231.00" y="276.31" font-size="7.3" fill="#787878" textLength="87.50" lengthAdjust="spacing" stroke="#787878" stroke-width="0.20">Output Condition Identifier:</text>
</svg>
</div></div>

</body></html>
